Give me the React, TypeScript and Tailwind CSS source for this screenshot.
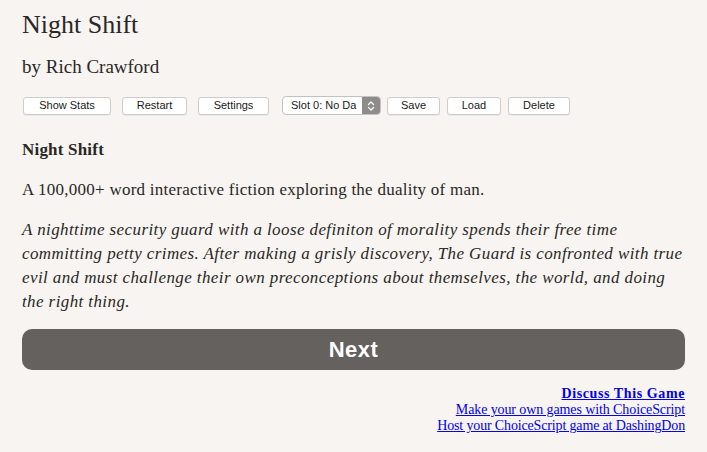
import React from 'react';

const serif = { fontFamily: '"Liberation Serif", Georgia, serif' };
const sans = { fontFamily: '"Liberation Sans", Arial, sans-serif' };

function Btn({ label, w }: { label: string; w: string }) {
    return (
        <button
            className={`h-[18px] ${w} bg-white border border-[#cfcccb] rounded-[3px] text-[11px] leading-none text-[#1a1a1a] shadow-[0_1px_0_rgba(0,0,0,0.05)]`}
            style={sans}
        >
            {label}
        </button>
    );
}

const blurb = [
    'A nighttime security guard with a loose definiton of morality spends their free time',
    'committing petty crimes. After making a grisly discovery, The Guard is confronted with true',
    'evil and must challenge their own preconceptions about themselves, the world, and doing',
    'the right thing.',
];

export default function App() {
    return (
        <div className="min-h-screen w-full bg-[#f7f4f1] text-[#2a2826]" style={serif}>
            <div className="px-[22px] pt-[10px] pb-6">
                {/* Header */}
                <h1 className="text-[26px] leading-[30px] font-normal">Night Shift</h1>
                <h2 className="mt-[16px] text-[19px] leading-[22px] font-normal">by Rich Crawford</h2>

                {/* Toolbar */}
                <div className="mt-[18px] flex items-center">
                    <div className="ml-px flex items-center gap-[11px]">
                        <Btn label="Show Stats" w="w-[88px]" />
                        <Btn label="Restart" w="w-[65px]" />
                        <Btn label="Settings" w="w-[71px]" />
                    </div>
                    <div
                        className="ml-[13px] h-[19px] w-[99px] flex items-center bg-white border border-[#c4c1bf] rounded-[4px] overflow-hidden"
                        style={sans}
                    >
                        <span className="flex-1 pl-[8px] text-[11px] leading-none text-[#1a1a1a] whitespace-nowrap overflow-hidden">Slot 0: No Da</span>
                        <span className="h-full w-[18px] bg-[#8e8c8b] flex items-center justify-center">
                            <svg width="8" height="12" viewBox="0 0 8 12" fill="none" stroke="#fff" strokeWidth="1.4" strokeLinecap="round" strokeLinejoin="round">
                                <path d="M1.5 4.5 L4 2 L6.5 4.5" />
                                <path d="M1.5 7.5 L4 10 L6.5 7.5" />
                            </svg>
                        </span>
                    </div>
                    <div className="ml-[6px] flex items-center gap-[7px]">
                        <Btn label="Save" w="w-[53px]" />
                        <Btn label="Load" w="w-[54px]" />
                        <Btn label="Delete" w="w-[62px]" />
                    </div>
                </div>

                {/* Content */}
                <p className="mt-[23px] text-[17px] leading-[24px] font-bold tracking-[0.2px]">Night Shift</p>
                <p className="mt-[16px] text-[17px] leading-[24px] tracking-[0.25px]">A 100,000+ word interactive fiction exploring the duality of man.</p>
                <p className="mt-[16px] text-[17px] leading-[24px] italic tracking-[0.4px]">
                    {blurb.map(line => (
                        <span key={line} className="block whitespace-nowrap">{line}</span>
                    ))}
                </p>

                <button
                    className="mt-[15px] w-full h-[41px] rounded-[10px] bg-[#64615e] text-white text-[22px] font-bold tracking-[0.5px]"
                    style={sans}
                >
                    Next
                </button>

                {/* Footer links */}
                <div className="mt-[16px] flex flex-col items-end text-[14px] leading-[16px] text-[#0000ee]">
                    <a href="#" className="underline font-bold tracking-[0.6px]">Discuss This Game</a>
                    <a href="#" className="underline tracking-[-0.1px]">Make your own games with ChoiceScript</a>
                    <a href="#" className="underline tracking-[-0.15px]">Host your ChoiceScript game at DashingDon</a>
                </div>
            </div>
        </div>
    );
}
